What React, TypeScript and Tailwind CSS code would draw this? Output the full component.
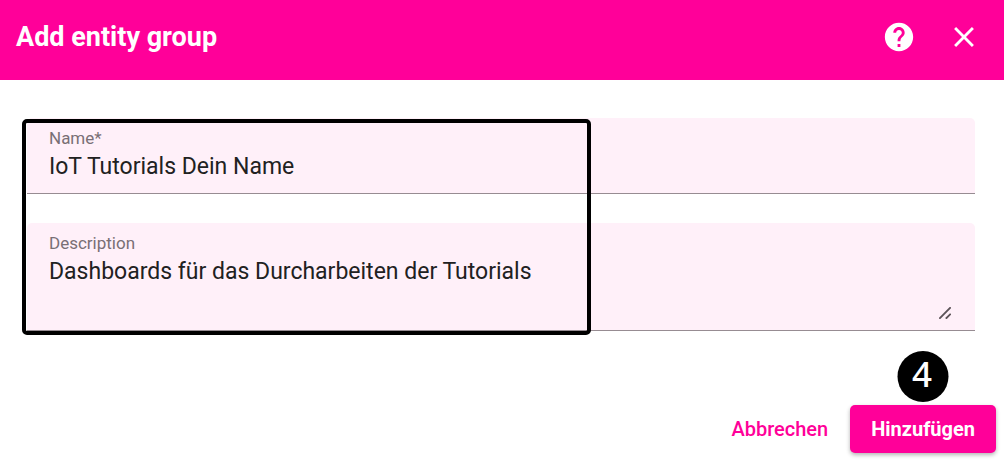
import { useState } from 'react';
import { MdClose, MdHelp } from 'react-icons/md';

function ResizeGrip() {
  return (
    <svg
      className="pointer-events-none absolute right-6 bottom-[11px] size-3"
      viewBox="0 0 12 12"
      stroke="#5c5358"
      strokeWidth="1.9"
      aria-hidden="true"
    >
      <path d="M0.3 11.7 11.7 0.3M6.8 11.7 11.7 6.8" />
    </svg>
  );
}

export default function App() {
  const [name, setName] = useState('IoT Tutorials Dein Name');
  const [description, setDescription] = useState('Dashboards für das Durcharbeiten der Tutorials');

  return (
    <form
      className="bg-white font-[Roboto,sans-serif] text-[#212121]"
      onSubmit={(event) => event.preventDefault()}
    >
      <header className="flex h-20 items-center justify-between bg-[#ff0099] pr-[23px] pb-[6px] pl-4 text-white">
        <h1 className="text-[27px] leading-8 font-bold">Add entity group</h1>
        <div className="flex gap-[31px]">
          <button type="button" aria-label="Help">
            <MdHelp className="size-[34px]" />
          </button>
          <button type="button" aria-label="Close">
            <MdClose className="size-[34px]" />
          </button>
        </div>
      </header>

      <div className="pt-[38px] pr-[29px] pl-[27px]">
        <div className="relative flex flex-col gap-[29px]">
          <div className="flex h-[76px] flex-col rounded-t-[5px] border-b border-[#978c92] bg-[#fff0f9] px-[22px] pt-[10px]">
            <label htmlFor="group-name" className="text-[17px] leading-5 text-[#796f75]">
              Name*
            </label>
            <input
              id="group-name"
              className="w-full text-[23px] leading-[38px] outline-none"
              value={name}
              onChange={(event) => setName(event.target.value)}
            />
          </div>
          <div className="relative flex h-[108px] flex-col rounded-t-[5px] border-b border-[#978c92] bg-[#fff0f9] px-[22px] pt-[10px]">
            <label htmlFor="group-description" className="text-[17px] leading-5 text-[#796f75]">
              Description
            </label>
            <textarea
              id="group-description"
              className="w-full flex-1 resize-none text-[23px] leading-[38px] outline-none"
              value={description}
              onChange={(event) => setDescription(event.target.value)}
            />
            <ResizeGrip />
          </div>
          <div className="pointer-events-none absolute top-px -bottom-1 -left-[5px] w-[569px] rounded-[5px] border-4 border-black" />
        </div>
      </div>

      <footer className="flex items-center justify-end pt-[74px] pr-2 pb-2">
        <button type="button" className="h-12 px-[22px] text-[20px] font-medium text-[#ff0099]">
          Abbrechen
        </button>
        <div className="relative">
          <button
            type="submit"
            className="h-12 rounded-[5px] bg-[#ff0099] px-[21px] text-[20px] font-bold text-white shadow-[0_2px_4px_rgba(0,0,0,0.3)]"
          >
            Hinzufügen
          </button>
          <span className="absolute bottom-[51px] left-1/2 flex size-[51px] -translate-x-1/2 items-center justify-center rounded-full bg-black pr-[2px] pb-[6px] font-['Noto_Sans',sans-serif] text-[35px] leading-none font-medium text-white">
            4
          </span>
        </div>
      </footer>
    </form>
  );
}
